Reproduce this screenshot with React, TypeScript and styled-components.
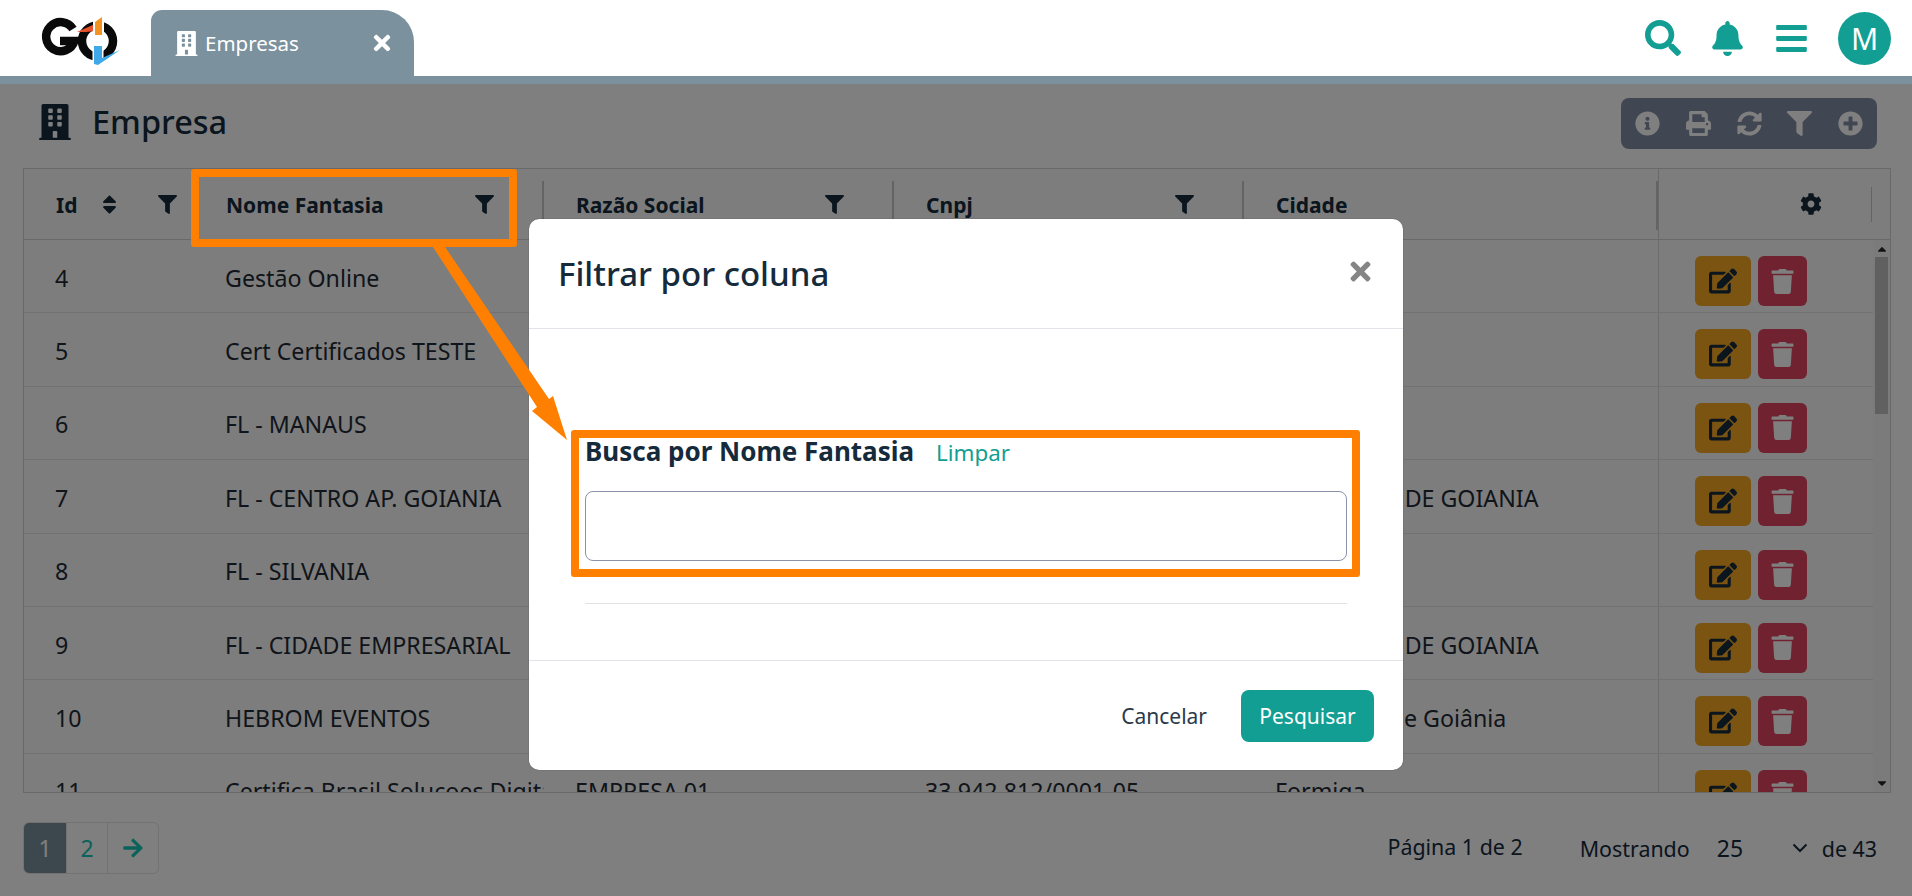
import React from "react";
import styled, { createGlobalStyle } from "styled-components";
import {
  FaBars, FaBell, FaBuilding, FaCog, FaEdit, FaFilter, FaInfoCircle, FaPlusCircle,
  FaPrint, FaSearch, FaSort, FaSyncAlt, FaTimes, FaTrash, FaArrowRight, FaCaretUp, FaCaretDown,
} from "react-icons/fa";

const TEAL = "#129e92";
const INK = "#152b3c";

const Global = createGlobalStyle`
  html, body { margin: 0; padding: 0; height: 100%; overflow: hidden; background: #fff; }
  body { font-family: "Noto Sans", "Liberation Sans", sans-serif; font-size: 21px; color: ${INK}; }
  * { box-sizing: border-box; }
`;

const Page = styled.div`
  width: 1912px;
  height: 896px;
  position: relative;
  overflow: hidden;
`;

const TopBar = styled.header`
  position: relative;
  z-index: 20;
  height: 84px;
  background: #fff;
  border-bottom: 8px solid #7b919d;
  display: flex;
  align-items: stretch;
  padding-right: 21px;
`;

const LogoBox = styled.div`
  width: 151px;
  padding: 14px 0 0 40px;
  flex: none;
`;

const Tab = styled.div`
  margin-top: 10px;
  width: 263px;
  height: 66px;
  background: #7b919d;
  border-radius: 11px 32px 0 0;
  color: #fff;
  display: flex;
  align-items: center;
  padding: 0 20px 0 23px;
  font-size: 20.5px;
  gap: 6px;
  & > span { flex: 1; }
`;

const TopIcons = styled.div`
  margin-left: auto;
  display: flex;
  align-items: center;
  gap: 29px;
  color: ${TEAL};
`;

const Avatar = styled.div`
  width: 53px;
  height: 53px;
  border-radius: 50%;
  background: ${TEAL};
  color: #fff;
  font-size: 30px;
  display: flex;
  align-items: center;
  justify-content: center;
`;

const Content = styled.main`
  display: flex;
  flex-direction: column;
`;

const TitleRow = styled.div`
  height: 51px;
  margin: 14px 35px 19px 37px;
  display: flex;
  align-items: center;
`;

const TitleIcon = styled(FaBuilding)`
  margin-bottom: 4px;
  color: ${INK};
`;

const Title = styled.h1`
  margin: 0 0 4px 19px;
  font-size: 32.5px;
  line-height: 40px;
  font-weight: 500;
  color: ${INK};
`;

const Toolbar = styled.div`
  margin-left: auto;
  width: 256px;
  height: 51px;
  border-radius: 8px;
  background: #828ea4;
  color: #fff;
  padding: 0 14px;
  display: flex;
  align-items: center;
  justify-content: space-between;
`;

const Table = styled.section`
  margin-left: 23px;
  width: 1868px;
  height: 625px;
  border: 1px solid #d2d2d2;
  background: #fafafa;
  overflow: hidden;
`;

const HeadRow = styled.div`
  height: 71px;
  border-bottom: 1px solid #d2d2d2;
  display: flex;
`;

const BodyArea = styled.div`
  display: flex;
  height: 552px;
  overflow: hidden;
`;

const Rows = styled.div`
  flex: 1;
  min-width: 0;
`;

const Row = styled.div`
  height: 73.4px;
  border-bottom: 1px solid #e4e4ea;
  display: flex;
`;

const HeadCell = styled.div<{ $w: number; $pr?: number; $sep?: boolean }>`
  position: relative;
  width: ${(p) => p.$w}px;
  flex: none;
  padding: 2px ${(p) => p.$pr ?? 50}px 0 32px;
  display: flex;
  align-items: center;
  justify-content: space-between;
  font-size: 21px;
  font-weight: 700;
  color: ${INK};
  & > svg { margin-top: -2px; }
  ${(p) =>
    p.$sep
      ? `&::after { content: ""; position: absolute; right: 0; top: 12px; height: 49px; width: 2px; background: #c8c8c8; }`
      : ""}
`;

const ActionHead = styled.div`
  flex: 1;
  position: relative;
  border-left: 1px solid #d2d2d2;
  display: flex;
  align-items: center;
  padding-left: 141px;
  color: ${INK};
  &::after {
    content: "";
    position: absolute;
    right: 18px;
    top: 18px;
    height: 35px;
    width: 1px;
    background: #c8c8c8;
  }
`;

const SortIcon = styled(FaSort)`
  margin-left: 21px;
  margin-right: auto;
`;

const Cell = styled.div<{ $w: number }>`
  width: ${(p) => p.$w}px;
  flex: none;
  padding-left: 31px;
  padding-top: 3px;
  display: flex;
  align-items: center;
  white-space: nowrap;
  overflow: hidden;
  font-size: 23.2px;
  color: #1e2a35;
`;

const ActionCell = styled.div`
  flex: 1;
  border-left: 1px solid #d8d8d8;
  padding: 16px 0 0 36px;
  display: flex;
  align-items: flex-start;
  gap: 7px;
`;

const IconButton = styled.div<{ $bg: string; $w: number; $fg: string }>`
  width: ${(p) => p.$w}px;
  height: 50px;
  border-radius: 6px;
  background: ${(p) => p.$bg};
  color: ${(p) => p.$fg};
  display: flex;
  align-items: center;
  justify-content: center;
`;

const ScrollTrack = styled.div`
  width: 17px;
  flex: none;
  background: #f6f6f6;
  color: #262626;
  display: flex;
  flex-direction: column;
  align-items: center;
  padding-top: 2px;
`;

const ScrollThumb = styled.div`
  width: 13px;
  height: 157px;
  margin-top: 1px;
  background: #c0c0c0;
`;

const DownCaret = styled(FaCaretDown)`
  margin-top: auto;
  margin-bottom: 2px;
`;

const Footer = styled.footer`
  margin: 29px 35px 0 23px;
  display: flex;
  align-items: center;
  font-size: 21.4px;
  color: ${INK};
`;

const Pagination = styled.nav`
  display: flex;
  height: 52px;
  border: 1px solid #e4e4e4;
  border-radius: 6px;
  overflow: hidden;
`;

const PageItem = styled.div<{ $active?: boolean; $w: number }>`
  width: ${(p) => p.$w}px;
  display: flex;
  align-items: center;
  justify-content: center;
  font-size: 23px;
  background: ${(p) => (p.$active ? "#7b919d" : "transparent")};
  color: ${(p) => (p.$active ? "#fff" : "#14c4b4")};
  & + & { border-left: 1px solid #e4e4e4; }
`;

const PageInfo = styled.span`
  margin-left: auto;
  margin-top: -4px;
`;

const ShowLabel = styled.span`
  margin-left: 57px;
`;

const ShowValue = styled.span`
  margin-left: 27px;
  width: 75px;
  font-size: 23px;
`;

const OfLabel = styled.span`
  margin-left: 14px;
`;

const Chevron = styled.svg`
  display: block;
`;

const ModalLayer = styled.div`
  position: absolute;
  inset: 84px 0 0 0;
  z-index: 10;
  background: rgba(0, 0, 0, 0.5);
`;

const Modal = styled.div`
  position: absolute;
  left: 529px;
  top: 135px;
  width: 874px;
  height: 551px;
  background: #fff;
  border-radius: 10px;
  display: flex;
  flex-direction: column;
  box-shadow: 0 0 1px rgba(0, 0, 0, 0.6);
`;

const ModalHeader = styled.div`
  height: 110px;
  border-bottom: 1px solid #e3e3ea;
  padding: 0 28px 0 29px;
  display: flex;
  align-items: center;
  justify-content: space-between;
`;

const ModalTitle = styled.h2`
  margin: 0;
  font-size: 33px;
  font-weight: 500;
  color: ${INK};
`;

const Close = styled(FaTimes)`
  color: #858585;
  margin-bottom: 4px;
`;

const ModalBody = styled.div`
  flex: 1;
  padding: 104px 56px 0;
  display: flex;
  flex-direction: column;
`;

const FieldHead = styled.div`
  display: flex;
  align-items: baseline;
  gap: 22px;
  height: 58px;
`;

const FieldLabel = styled.label`
  font-size: 26px;
  font-weight: 700;
  color: ${INK};
`;

const ClearLink = styled.a`
  font-size: 22.4px;
  color: ${TEAL};
`;

const SearchInput = styled.input`
  display: block;
  width: 762px;
  height: 70px;
  border: 1px solid #8a93ab;
  border-radius: 8px;
  background: #fff;
`;

const Rule = styled.hr`
  margin: 42px 0 0;
  border: 0;
  border-top: 1px solid #e2e2e2;
  width: 762px;
`;

const ModalFooter = styled.div`
  height: 110px;
  border-top: 1px solid #e3e3ea;
  padding: 0 29px 0 0;
  display: flex;
  align-items: center;
  justify-content: flex-end;
  gap: 34px;
`;

const CancelLink = styled.span`
  font-size: 21px;
  color: #2b3a4b;
`;

const SearchButton = styled.button`
  width: 133px;
  height: 52px;
  border: 0;
  border-radius: 8px;
  background: ${TEAL};
  color: #fff;
  font: 400 21px "Noto Sans", sans-serif;
`;

const Callout = styled.div<{ $x: number; $y: number; $w: number; $h: number }>`
  position: absolute;
  z-index: 30;
  left: ${(p) => p.$x}px;
  top: ${(p) => p.$y}px;
  width: ${(p) => p.$w}px;
  height: ${(p) => p.$h}px;
  border: 8px solid #ff8000;
  border-radius: 3px;
  pointer-events: none;
`;

const ArrowSvg = styled.svg`
  position: absolute;
  z-index: 30;
  left: 0;
  top: 0;
  pointer-events: none;
`;

const Logo = () => (
  <svg width="84" height="54" viewBox="40 14 84 54">
    <path d="M73 29 A14.5 14.5 0 1 0 74.5 41 H60" fill="none" stroke="#0a0a0a" strokeWidth="8.5" />
    <circle cx="97.5" cy="41" r="15.5" fill="none" stroke="#0a0a0a" strokeWidth="8.5" />
    <polygon points="77,32 95,24 95,31 86,32" fill="#e8502a" />
    <rect x="93" y="20" width="11" height="16" fill="#fff" />
    <rect x="92.5" y="45" width="11" height="21" fill="#fff" />
    <polygon points="95,22 102,17 102,35 95,35" fill="#f39422" />
    <polygon points="94,46 102,46 102,58 120,50 98,65 94,64" fill="#3ea9e6" />
  </svg>
);

type RowData = [string, string, string, string, string];

const rows: RowData[] = [
  ["4", "Gestão Online", "GESTAO ONLINE LTDA", "10.234.567/0001-10", "Goiânia"],
  ["5", "Cert Certificados TESTE", "CERT CERTIFICADOS", "11.345.678/0001-20", "Goiânia"],
  ["6", "FL - MANAUS", "FL MANAUS LTDA", "12.456.789/0001-30", "Manaus"],
  ["7", "FL - CENTRO AP. GOIANIA", "FL CENTRO LTDA", "13.567.890/0001-40", "APARECIDA DE GOIANIA"],
  ["8", "FL - SILVANIA", "FL SILVANIA LTDA", "14.678.901/0001-50", "Silvania"],
  ["9", "FL - CIDADE EMPRESARIAL", "FL CIDADE LTDA", "15.789.012/0001-60", "APARECIDA DE GOIANIA"],
  ["10", "HEBROM EVENTOS", "HEBROM EVENTOS LTDA", "16.890.123/0001-70", "Aparecida de Goiânia"],
  ["11", "Certifica Brasil Solucoes Digitais", "EMPRESA 01", "33.942.812/0001-05", "Formiga"],
];

const columns = [
  { w: 170, label: "Id", sort: true, pr: 17 },
  { w: 350, label: "Nome Fantasia", sep: true },
  { w: 350, label: "Razão Social", sep: true },
  { w: 350, label: "Cnpj", sep: true },
  { w: 414, label: "Cidade", sep: true },
];

export default function App() {
  return (
    <Page>
      <Global />
      <TopBar>
        <LogoBox>
          <Logo />
        </LogoBox>
        <Tab>
          <FaBuilding size={25} />
          <span>Empresas</span>
          <FaTimes size={24} />
        </Tab>
        <TopIcons>
          <FaSearch size={36} />
          <FaBell size={35} />
          <FaBars size={35} />
          <Avatar>M</Avatar>
        </TopIcons>
      </TopBar>

      <Content>
        <TitleRow>
          <TitleIcon size={36} />
          <Title>Empresa</Title>
          <Toolbar>
            <FaInfoCircle size={25} />
            <FaPrint size={25} />
            <FaSyncAlt size={25} />
            <FaFilter size={25} />
            <FaPlusCircle size={25} />
          </Toolbar>
        </TitleRow>

        <Table>
          <HeadRow>
            {columns.map((c) => (
              <HeadCell key={c.label} $w={c.w} $pr={c.pr} $sep={c.sep}>
                <span>{c.label}</span>
                {c.sort && <SortIcon size={23} />}
                {c.label !== "Cidade" && <FaFilter size={19} />}
              </HeadCell>
            ))}
            <ActionHead>
              <FaCog size={22} />
            </ActionHead>
          </HeadRow>
          <BodyArea>
            <Rows>
              {rows.map((r) => (
                <Row key={r[0]}>
                  {r.map((v, i) => (
                    <Cell key={i} $w={columns[i].w}>
                      {v}
                    </Cell>
                  ))}
                  <ActionCell>
                    <IconButton $bg="#f7a824" $fg={INK} $w={56}>
                      <FaEdit size={28} />
                    </IconButton>
                    <IconButton $bg="#e04460" $fg="#fff" $w={49}>
                      <FaTrash size={25} />
                    </IconButton>
                  </ActionCell>
                </Row>
              ))}
            </Rows>
            <ScrollTrack>
              <FaCaretUp size={14} />
              <ScrollThumb />
              <DownCaret size={14} />
            </ScrollTrack>
          </BodyArea>
        </Table>

        <Footer>
          <Pagination>
            <PageItem $active $w={42}>1</PageItem>
            <PageItem $w={41}>2</PageItem>
            <PageItem $w={51}><FaArrowRight size={22} /></PageItem>
          </Pagination>
          <PageInfo>Página 1 de 2</PageInfo>
          <ShowLabel>Mostrando</ShowLabel>
          <ShowValue>25</ShowValue>
          <Chevron width="16" height="10" viewBox="0 0 16 10">
            <path d="M1.5 1.5 L8 8 L14.5 1.5" fill="none" stroke={INK} strokeWidth="2" />
          </Chevron>
          <OfLabel>de 43</OfLabel>
        </Footer>
      </Content>

      <ModalLayer>
        <Modal>
          <ModalHeader>
            <ModalTitle>Filtrar por coluna</ModalTitle>
            <Close size={29} />
          </ModalHeader>
          <ModalBody>
            <FieldHead>
              <FieldLabel>Busca por Nome Fantasia</FieldLabel>
              <ClearLink>Limpar</ClearLink>
            </FieldHead>
            <SearchInput />
            <Rule />
          </ModalBody>
          <ModalFooter>
            <CancelLink>Cancelar</CancelLink>
            <SearchButton>Pesquisar</SearchButton>
          </ModalFooter>
        </Modal>
      </ModalLayer>

      <Callout $x={191} $y={169} $w={326} $h={78} />
      <Callout $x={571} $y={430} $w={789} $h={147} />
      <ArrowSvg width="1912" height="896" viewBox="0 0 1912 896">
        <polygon points="433,247 445,247 549,399 553,396 567,440 532,411 537,407" fill="#ff8000" />
      </ArrowSvg>
    </Page>
  );
}
